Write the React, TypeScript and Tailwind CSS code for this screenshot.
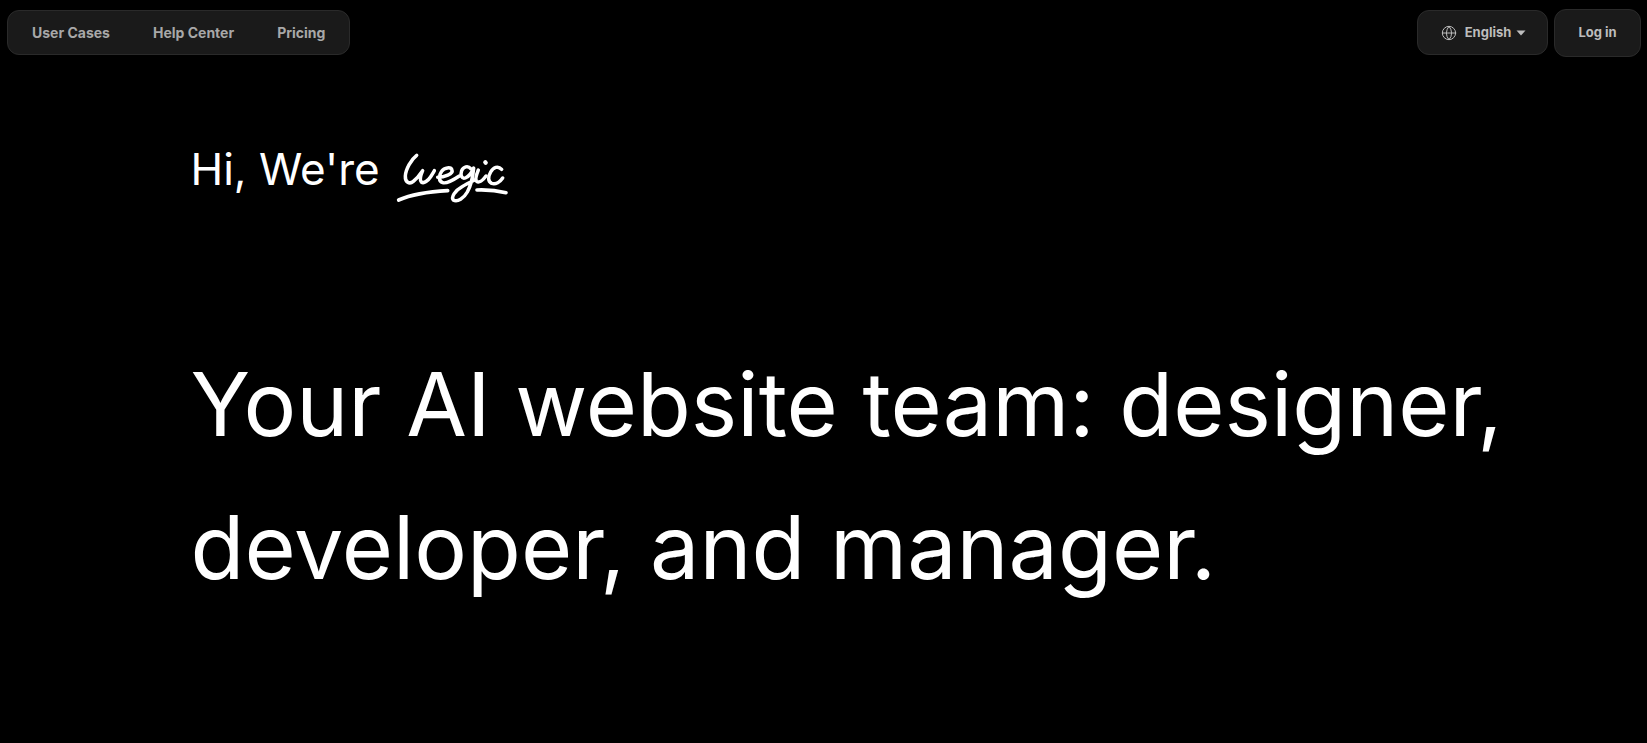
import { Globe } from 'lucide-react';

const navLinks = ['User Cases', 'Help Center', 'Pricing'];

// hand drawn wordmark, traced as single strokes
const WegicLogo = () => (
  <svg className="mt-[17px] shrink-0" width="115" height="55" viewBox="0 0 345 165" fill="none" stroke="white" strokeWidth="10.5" strokeLinecap="round" strokeLinejoin="round">
    <path d="M62 16C46 28 29 58 28 78C27 96 40 104 52 94C63 85 72 74 80 62C74 76 70 90 76 96C84 102 96 92 104 80C108 74 112 68 115 62" />
    <path d="M125 82C145 82 172 72 168 60C165 50 145 52 137 64C127 78 128 94 140 98C152 102 172 90 190 78" />
    <path d="M224 56C216 46 202 50 197 62C192 76 198 88 208 84C218 80 228 66 233 54C231 78 226 104 214 126C204 144 184 158 172 150C165 142 176 122 198 110C210 103 222 97 236 90" />
    <path d="M247 60C242 72 236 88 242 94C249 99 260 92 270 78" />
    <path d="M268 37L269 38" strokeWidth="13" />
    <path d="M317 58C306 46 292 52 284 66C276 80 275 94 287 100C299 104 312 96 320 84" />
    <path d="M8 150C40 136 100 125 155 122" strokeWidth="11" />
    <path d="M243 120C272 119 305 122 330 128" strokeWidth="11" />
  </svg>
);

const App = () => {
  return (
    <div className="min-h-screen bg-black font-['Inter',sans-serif] text-white">
      <header className="flex items-start justify-between pl-[7px] pr-[6px] pt-[9px]">
        <nav className="mt-px flex h-[45px] items-center gap-[43px] rounded-[12px] border border-[#2a2a2a] bg-[#1a1a1a] px-[24px]">
          {navLinks.map((link) => (
            <a key={link} className="text-[14px] font-bold text-[#a8a8a8]">
              {link}
            </a>
          ))}
        </nav>
        <div className="flex items-start gap-[6px]">
          <button className="mt-px flex h-[45px] w-[131px] items-center justify-center gap-[8px] rounded-[12px] border border-[#2a2a2a] bg-[#1a1a1a] pl-[2px] text-[13px] font-bold text-[#bdbdbd]">
            <Globe className="h-[16px] w-[16px]" strokeWidth={1.5} />
            <span className="flex items-center gap-[5px]">
              English
              <svg width="10" height="6" viewBox="0 0 10 6" fill="#bdbdbd">
                <path d="M0.5 0.5h9L5 5.5z" />
              </svg>
            </span>
          </button>
          <button className="h-[48px] w-[87px] rounded-[12px] border border-[#2a2a2a] bg-[#1a1a1a] pb-px text-[13px] font-bold text-[#bdbdbd]">
            Log in
          </button>
        </div>
      </header>

      <main className="pl-[190.5px] pt-[76px]">
        <div className="flex h-[72px] items-center gap-[16.5px]">
          <p className="text-[44px] leading-none">Hi, We're</p>
          <WegicLogo />
        </div>
        <h1 className="mt-[128px] max-w-[1400px] text-[88px] font-normal leading-[143px]">
          Your AI website team: designer, developer, and manager.
        </h1>
      </main>
    </div>
  );
};

export default App;
